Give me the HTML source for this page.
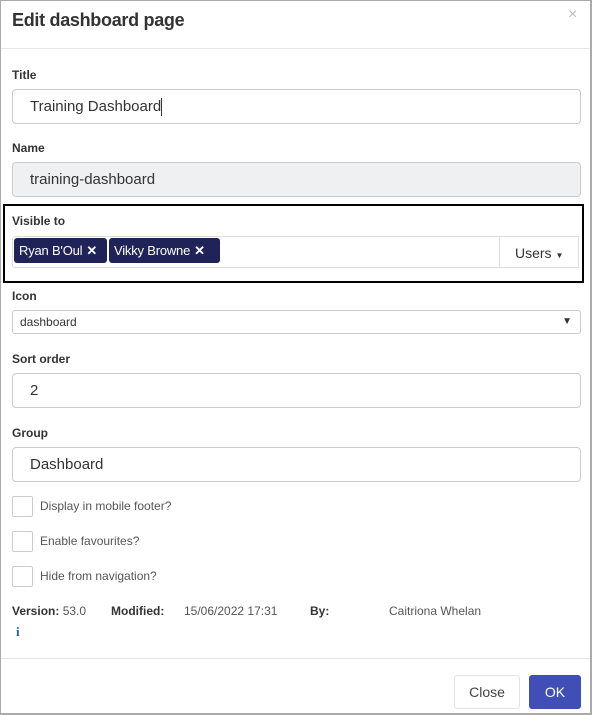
<!DOCTYPE html>
<html><head><meta charset="utf-8"><style>
*{box-sizing:border-box;margin:0;padding:0}
html,body{width:592px;height:715px;overflow:hidden;background:#fff;font-family:"Liberation Sans",sans-serif;color:#333}
.frame{position:absolute;left:0;top:0;width:592px;height:715px;border:1px solid #aaa;border-width:1px 2px 2px 1px}
.a{position:absolute}
.lbl{position:absolute;left:12px;font-size:12px;font-weight:bold;color:#333}
.inp{position:absolute;left:12px;width:569px;height:35px;border:1px solid #ccc;border-radius:4px;font-size:15px;color:#333;padding-left:17px;line-height:33px}
.chk{position:absolute;left:12px;width:21px;height:21px;border:1px solid #ccc;border-radius:2px;background:#fff}
.ct{position:absolute;left:40px;font-size:12px;color:#555}
.tag{position:absolute;top:238px;height:25px;background:#1f2357;color:#fff;border-radius:3px;font-size:13px;line-height:25px;padding-left:5px;white-space:nowrap;overflow:hidden;letter-spacing:-0.2px}
.tag b{font-size:13px;margin-left:4px}
.meta{position:absolute;top:604px;font-size:12px;color:#555}
</style></head><body>
<div class="frame"></div>
<div class="a" style="left:12px;top:10px;font-size:18px;font-weight:bold;color:#333;letter-spacing:-0.3px">Edit dashboard page</div>
<div class="a" style="left:568px;top:6px;font-size:16px;color:#bbb">×</div>
<div class="a" style="left:1px;top:48px;width:589px;height:1px;background:#e5e5e5"></div>

<div class="lbl" style="top:68px">Title</div>
<div class="inp" style="top:89px">Training Dashboard<span style="display:inline-block;width:1px;height:18px;background:#333;vertical-align:middle"></span></div>

<div class="lbl" style="top:141px">Name</div>
<div class="inp" style="top:162px;background:#eef0f1">training-dashboard</div>

<div class="a" style="left:3px;top:204px;width:581px;height:79px;border:2px solid #000"></div>
<div class="lbl" style="top:214px">Visible to</div>
<div class="a" style="left:12px;top:236px;width:488px;height:32px;border:1px solid #ddd;border-radius:3px 0 0 3px"></div>
<div class="tag" style="left:14px;width:93px">Ryan B'Oul<b>✕</b></div>
<div class="tag" style="left:109px;width:111px">Vikky Browne<b>✕</b></div>
<div class="a" style="left:499px;top:236px;width:80px;height:32px;border:1px solid #ddd;border-left:none;font-size:14px;color:#333;line-height:32px;padding-left:16px">Users <span style="font-size:8px">▼</span></div>

<div class="lbl" style="top:289px">Icon</div>
<div class="a" style="left:12px;top:310px;width:569px;height:24px;border:1px solid #ccc;border-radius:3px;font-size:12px;color:#333;line-height:22px;padding-left:7px">dashboard<span style="position:absolute;right:8px;font-size:10px">▼</span></div>

<div class="lbl" style="top:352px">Sort order</div>
<div class="inp" style="top:373px">2</div>

<div class="lbl" style="top:426px">Group</div>
<div class="inp" style="top:447px">Dashboard</div>

<div class="chk" style="top:496px"></div><div class="ct" style="top:499px">Display in mobile footer?</div>
<div class="chk" style="top:531px"></div><div class="ct" style="top:534px">Enable favourites?</div>
<div class="chk" style="top:566px"></div><div class="ct" style="top:569px">Hide from navigation?</div>

<div class="meta" style="left:12px"><b style="color:#333">Version:</b> 53.0</div>
<div class="meta" style="left:111px"><b style="color:#333">Modified:</b></div>
<div class="meta" style="left:184px">15/06/2022 17:31</div>
<div class="meta" style="left:310px"><b style="color:#333">By:</b></div>
<div class="meta" style="left:389px">Caitriona Whelan</div>
<div class="a" style="left:16px;top:624px;font-size:13px;font-weight:bold;color:#1565c0;font-family:'Liberation Serif',serif">i</div>

<div class="a" style="left:1px;top:658px;width:589px;height:1px;background:#e5e5e5"></div>
<div class="a" style="left:454px;top:675px;width:66px;height:34px;border:1px solid #e3e3e3;border-radius:3px;font-size:14px;color:#444;text-align:center;line-height:32px">Close</div>
<div class="a" style="left:529px;top:675px;width:52px;height:34px;background:#3f4fb5;border-radius:3px;font-size:14px;color:#fff;text-align:center;line-height:34px">OK</div>
</body></html>
